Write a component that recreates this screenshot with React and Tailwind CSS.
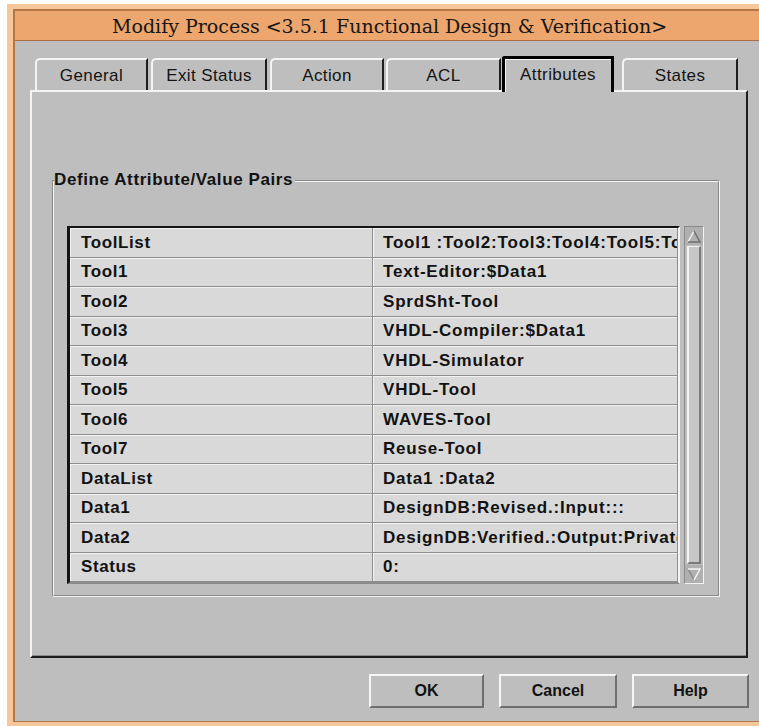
import React from 'react';

const tabs = [
  { label: 'General', cls: 'ml-[5px] w-[113px]' },
  { label: 'Exit Status', cls: 'ml-[3px] w-[116px]' },
  { label: 'Action', cls: 'ml-[3px] w-[114px]' },
  { label: 'ACL', cls: 'ml-[2px] w-[115px]' },
  { label: 'Attributes', cls: 'ml-[1px] w-[112px]', active: true },
  { label: 'States', cls: 'ml-[8px] w-[116px]' },
];

const rows = [
  ['ToolList', 'Tool1 :Tool2:Tool3:Tool4:Tool5:Tool6:Tool7'],
  ['Tool1', 'Text-Editor:$Data1'],
  ['Tool2', 'SprdSht-Tool'],
  ['Tool3', 'VHDL-Compiler:$Data1'],
  ['Tool4', 'VHDL-Simulator'],
  ['Tool5', 'VHDL-Tool'],
  ['Tool6', 'WAVES-Tool'],
  ['Tool7', 'Reuse-Tool'],
  ['DataList', 'Data1 :Data2'],
  ['Data1', 'DesignDB:Revised.:Input:::'],
  ['Data2', 'DesignDB:Verified.:Output:Private'],
  ['Status', '0:'],
];

const buttons = [
  { label: 'OK', cls: 'w-[115px]' },
  { label: 'Cancel', cls: 'w-[118px]' },
  { label: 'Help', cls: 'w-[117px]' },
];

const sans = "font-['Liberation_Sans',Arial,sans-serif]";

const Arrow = ({ down }) => (
  <div className="h-[18px] flex items-center justify-center bg-[#b0b0b0]">
    <svg width="14" height="13" viewBox="0 0 14 13">
      {down ? (
        <>
          <path d="M1 1 L7 12" stroke="#8a8a8a" strokeWidth="1.5" fill="none" />
          <path d="M1 1 L13 1 L7 12" stroke="#f4f4f4" strokeWidth="1.5" fill="none" />
        </>
      ) : (
        <>
          <path d="M7 1 L1 12" stroke="#f4f4f4" strokeWidth="1.5" fill="none" />
          <path d="M7 1 L13 12 L1 12" stroke="#6f6f6f" strokeWidth="1.5" fill="none" />
        </>
      )}
    </svg>
  </div>
);

export default function App() {
  return (
    <div className="w-screen h-screen overflow-hidden bg-white flex flex-col items-start">
      {/* window frame, its right edge lies past the page */}
      <div className="shrink-0 ml-[7px] mt-[4px] w-[790px] min-w-[790px] h-[722px] bg-[#f6c79b] pl-[6px] pt-[5px] pb-[4px]">
        <div className="w-[784px] h-full flex flex-col border-l-2 border-t-2 border-b border-[#b5764a] bg-[#bebebe]">
          {/* title bar */}
          <div className="h-[30px] shrink-0 flex items-center bg-[#eca66e] border-b border-[#a86f47] pl-[97px]">
            <span className="font-['DejaVu_Serif',serif] text-[19px] leading-[24px] text-[#161616] whitespace-nowrap">
              Modify Process &lt;3.5.1 Functional Design &amp; Verification&gt;
            </span>
          </div>

          <div className="flex-1 pl-[15px] pt-[15px]">
            {/* tab strip */}
            <div className="flex items-end h-[34px]">
              {tabs.map(t =>
                t.active ? (
                  <div
                    key={t.label}
                    className={`${t.cls} relative z-10 h-[36px] -mb-[2px] border-[3px] border-b-0 border-black rounded-tl-[3px] bg-[#bebebe] shadow-[inset_1px_1px_0_#f6f6f6] flex items-center justify-center pb-[2px] ${sans} text-[17px] tracking-[0.4px] text-[#141414]`}
                  >
                    {t.label}
                  </div>
                ) : (
                  <div
                    key={t.label}
                    className={`${t.cls} h-[32px] border-t-2 border-l-2 border-r-2 border-t-[#f4f4f4] border-l-[#f4f4f4] border-r-[#1e1e1e] rounded-tl-[5px] bg-[#bebebe] flex items-center justify-center pt-[1px] ${sans} text-[17px] tracking-[0.4px] text-[#141414]`}
                  >
                    {t.label}
                  </div>
                )
              )}
            </div>

            {/* tab page */}
            <div className="w-[718px] h-[568px] border-2 border-t-[#f4f4f4] border-l-[#f4f4f4] border-r-[#1e1e1e] border-b-[#1e1e1e] shadow-[inset_0_-1px_0_#8a8a8a] pl-[20px] pt-[88px]">
              {/* group box */}
              <div className="relative w-[668px] h-[417px] border border-t-[#8a8a8a] border-l-[#8a8a8a] border-r-[#f4f4f4] border-b-[#f4f4f4]">
                <div className="h-full border border-t-[#f4f4f4] border-l-[#f4f4f4] border-r-[#8a8a8a] border-b-[#8a8a8a] pl-[13px] pt-[44px] flex items-start">
                  {/* attribute table */}
                  <div className="w-[613px] h-[358px] border-t-2 border-l-[3px] border-b-2 border-r-2 border-t-[#141414] border-l-[#141414] border-b-[#8a8a8a] border-r-[#f4f4f4] grid grid-cols-[303px_1fr] grid-rows-[repeat(12,minmax(0,1fr))]">
                    {rows.map(([k, v]) => (
                      <React.Fragment key={k}>
                        <div className={`bg-[#d9d9d9] border-b border-r border-[#8e8e8e] shadow-[inset_1px_1px_0_#f2f2f2] flex items-center pl-[11px] overflow-hidden whitespace-nowrap ${sans} font-bold text-[17px] tracking-[0.6px] text-[#121212]`}>
                          {k}
                        </div>
                        <div className={`bg-[#d9d9d9] border-b border-r border-[#8e8e8e] shadow-[inset_1px_1px_0_#f2f2f2] flex items-center pl-[10px] overflow-hidden whitespace-nowrap ${sans} font-bold text-[17px] tracking-[0.8px] text-[#121212]`}>
                          {v}
                        </div>
                      </React.Fragment>
                    ))}
                  </div>

                  {/* vertical scrollbar */}
                  <div className="ml-[4px] w-[20px] h-[358px] border border-t-[#8a8a8a] border-l-[#8a8a8a] border-r-[#f4f4f4] border-b-[#f4f4f4] flex flex-col bg-[#bebebe]">
                    <Arrow />
                    <div className="flex-1 px-[2px] py-[1px]">
                      <div className="h-full border-l-2 border-t border-r-2 border-b-2 border-l-[#f4f4f4] border-t-[#f4f4f4] border-r-[#7a7a7a] border-b-[#7a7a7a] bg-[#c6c6c6]" />
                    </div>
                    <Arrow down />
                  </div>
                </div>

                <span className={`absolute left-[1px] -top-[11px] bg-[#bebebe] pr-[2px] ${sans} font-bold text-[17px] leading-[20px] text-[#121212] tracking-[0.6px]`}>
                  Define Attribute/Value Pairs
                </span>
              </div>
            </div>

            {/* dialog buttons */}
            <div className="w-[719px] mt-[16px] flex justify-end gap-[15px]">
              {buttons.map(b => (
                <div
                  key={b.label}
                  className={`${b.cls} h-[34px] border-2 border-t-[#f6f6f6] border-l-[#f6f6f6] border-r-[#6e6e6e] border-b-[#6e6e6e] flex items-center justify-center ${sans} font-bold text-[16px] text-[#121212]`}
                >
                  {b.label}
                </div>
              ))}
            </div>
          </div>
        </div>
      </div>
    </div>
  );
}
